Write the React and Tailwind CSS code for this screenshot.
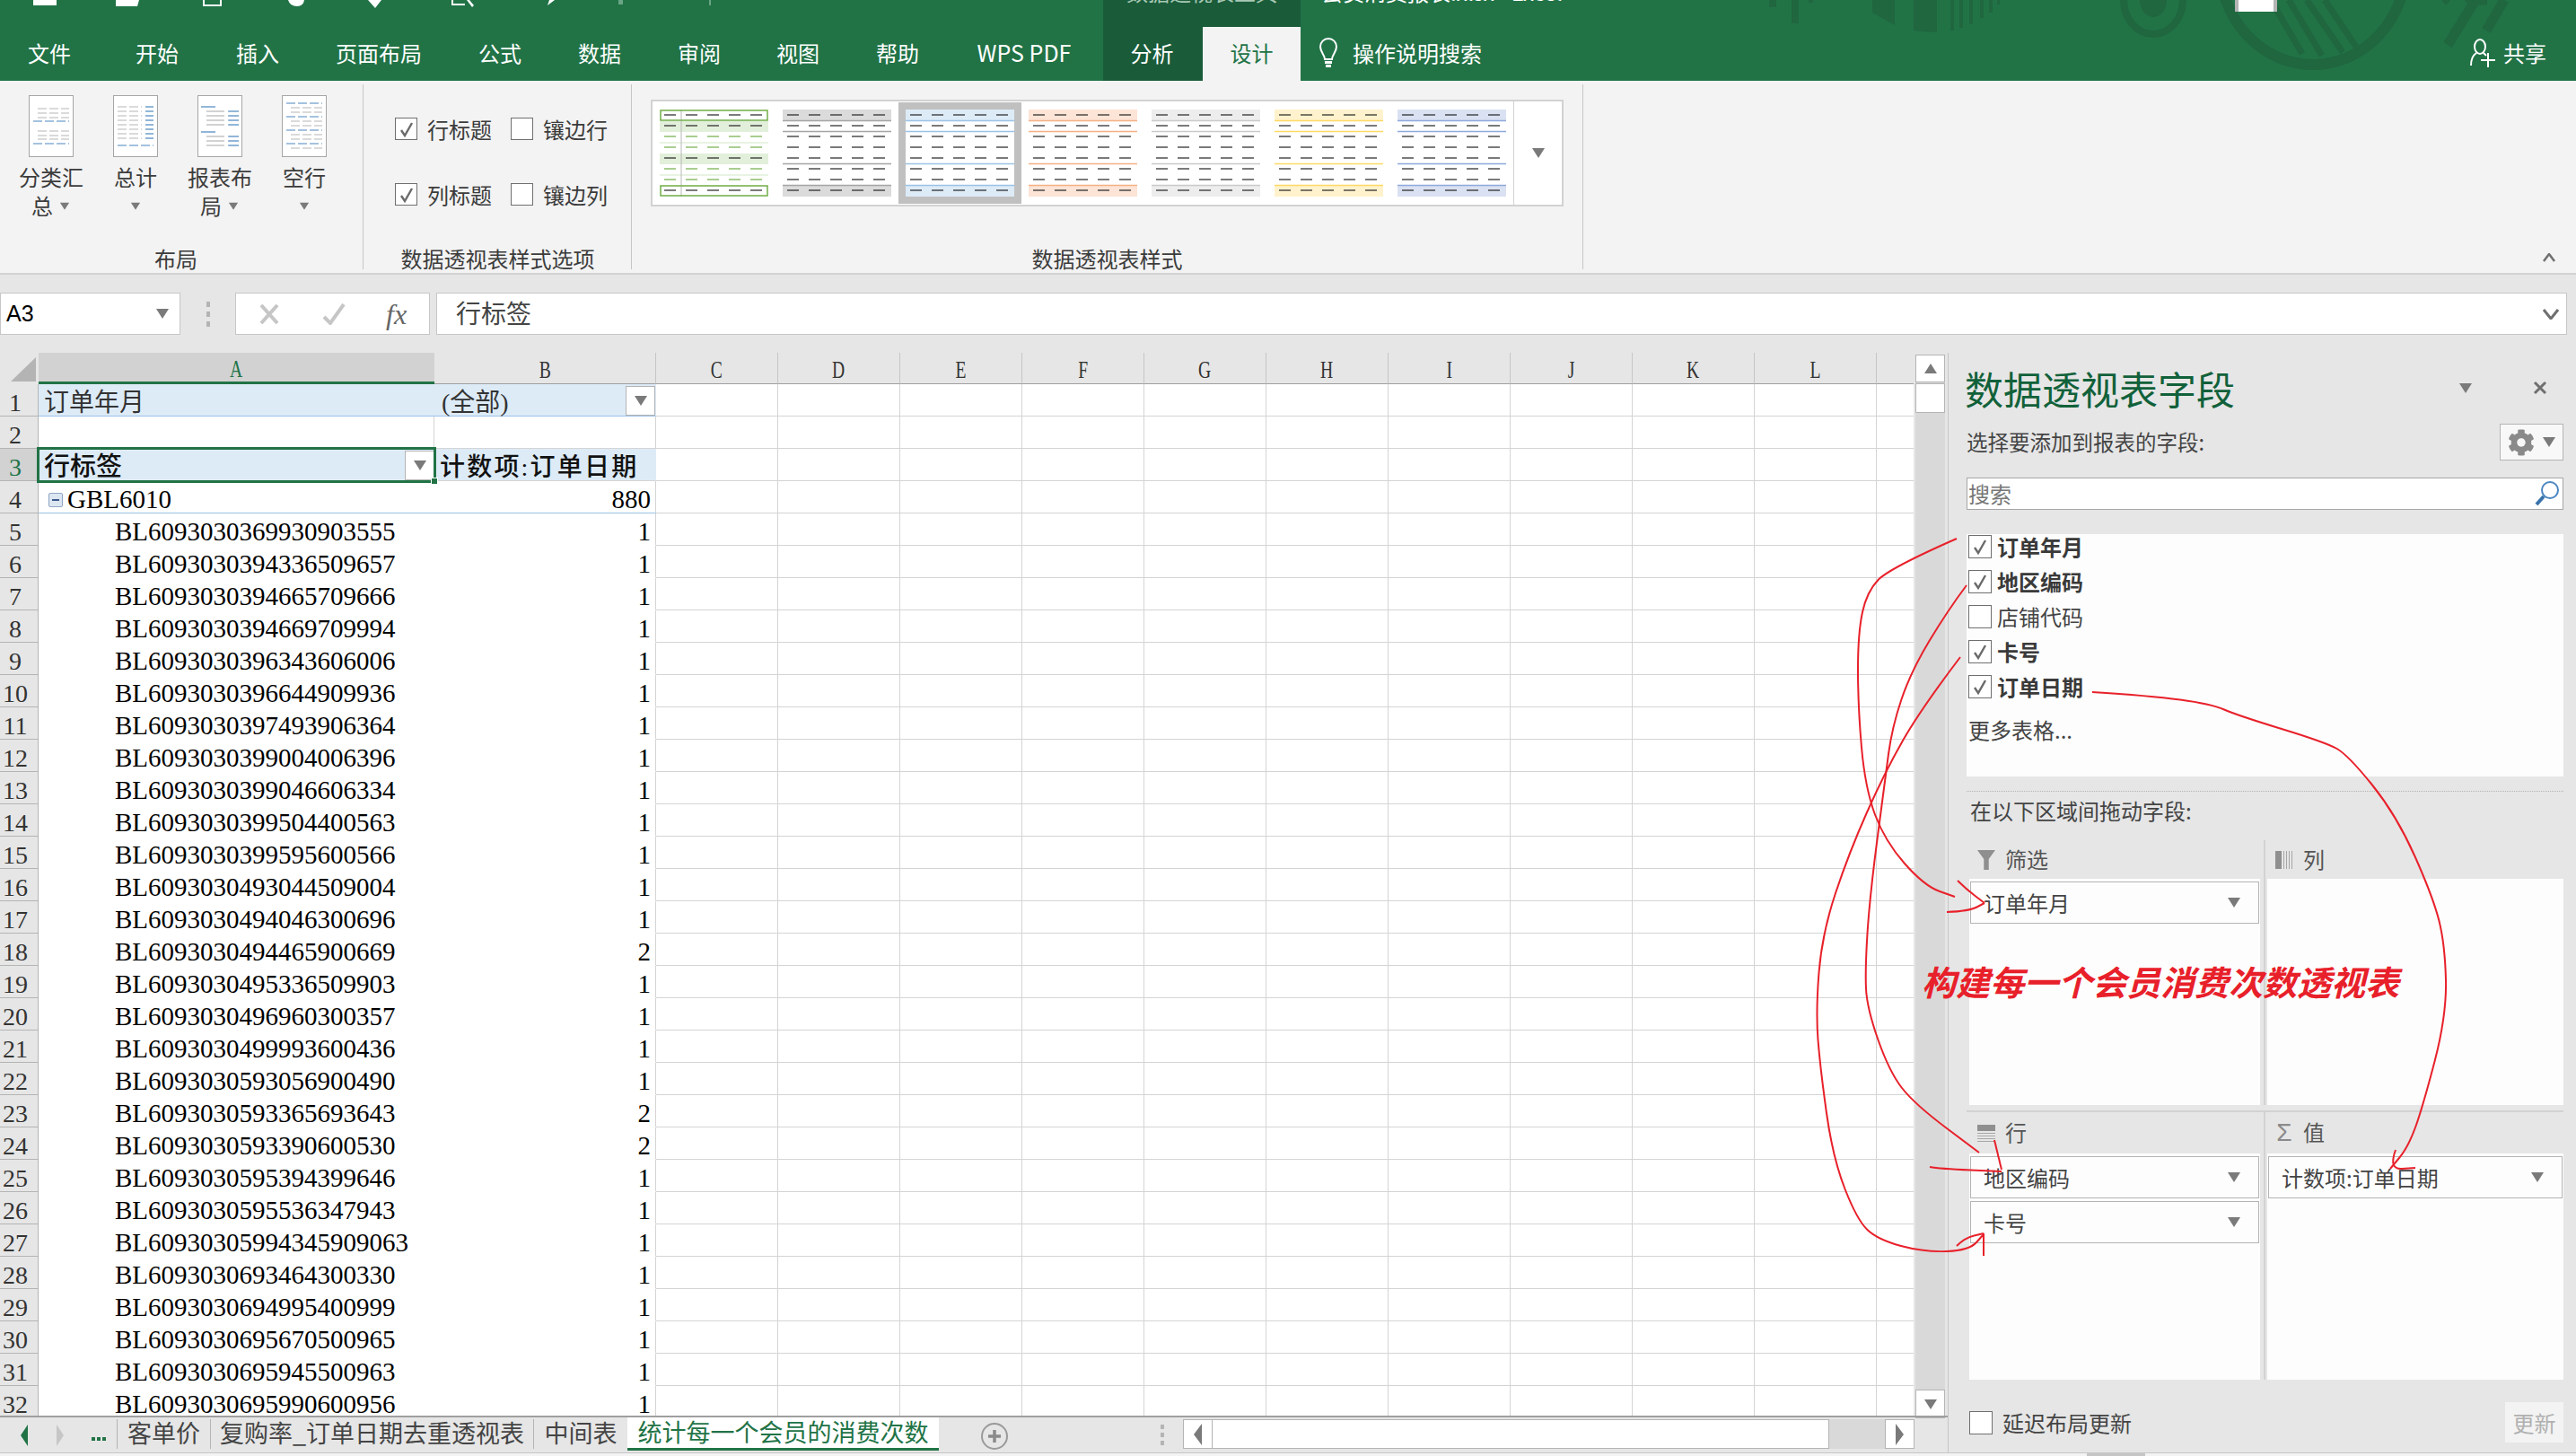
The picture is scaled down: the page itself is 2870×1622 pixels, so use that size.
import { FaCog } from 'react-icons/fa';

const dataRows = [
  ['BL6093030369930903555', 1], ['BL6093030394336509657', 1], ['BL6093030394665709666', 1], ['BL6093030394669709994', 1],
  ['BL6093030396343606006', 1], ['BL6093030396644909936', 1], ['BL6093030397493906364', 1], ['BL6093030399004006396', 1],
  ['BL6093030399046606334', 1], ['BL6093030399504400563', 1], ['BL6093030399595600566', 1], ['BL6093030493044509004', 1],
  ['BL6093030494046300696', 1], ['BL6093030494465900669', 2], ['BL6093030495336509903', 1], ['BL6093030496960300357', 1],
  ['BL6093030499993600436', 1], ['BL6093030593056900490', 1], ['BL6093030593365693643', 2], ['BL6093030593390600530', 2],
  ['BL6093030595394399646', 1], ['BL6093030595536347943', 1], ['BL60930305994345909063', 1], ['BL6093030693464300330', 1],
  ['BL6093030694995400999', 1], ['BL6093030695670500965', 1], ['BL6093030695945500963', 1], ['BL6093030695990600956', 1],
];

const tabs = [
  ['文件', 'w-[110px]'], ['开始', 'w-[130px]'], ['插入', 'w-[94px]'], ['页面布局', 'w-[176px]'], ['公式', 'w-[94px]'],
  ['数据', 'w-[128px]'], ['审阅', 'w-[94px]'], ['视图', 'w-[126px]'], ['帮助', 'w-[96px]'], ['WPS PDF', 'w-[181px] pl-[5px] text-[25px]'],
];

const otherCols = ['C', 'D', 'E', 'F', 'G', 'H', 'I', 'J', 'K', 'L'];

const styles = [
  { fill: '#dbdbdb', line: '#a5a5a5' },
  { fill: '#ddebf7', line: '#9bc2e6', selected: true },
  { fill: '#fce4d6', line: '#f4b084' },
  { fill: '#ededed', line: '#c9c9c9' },
  { fill: '#fff2cc', line: '#ffd966' },
  { fill: '#d9e1f2', line: '#8ea9db' },
];

function Tri({ dir = 'down', className = '' }) {
  const pts = { down: '0,0 14,0 7,11', up: '0,11 14,11 7,0', left: '9,0 9,24 0,12', right: '0,0 0,24 9,12' }[dir];
  const box = dir === 'left' || dir === 'right' ? [9, 24] : [14, 11];
  return (
    <svg width={box[0]} height={box[1]} viewBox={`0 0 ${box[0]} ${box[1]}`} className={`shrink-0 ${className}`}>
      <polygon points={pts} fill="#7a7a7a" />
    </svg>
  );
}

function Check({ checked, size = 'w-[25px] h-[25px]' }) {
  return (
    <div className={`${size} shrink-0 bg-white border border-[#6f6f6f] flex items-center justify-center`}>
      {checked && (
        <svg width="16" height="18" viewBox="0 0 16 18">
          <path d="M2 10 L6 16 L14 2" fill="none" stroke="#6a6a6a" strokeWidth="2.4" />
        </svg>
      )}
    </div>
  );
}

function DocIcon({ rows }) {
  return (
    <svg width="50" height="69" viewBox="0 0 50 69" className="shrink-0">
      <rect x="0.5" y="0.5" width="49" height="68" fill="#fff" stroke="#a6a6a6" />
      {rows.map(([y, x1, x2, c], i) => (
        <line key={i} x1={x1} x2={x2} y1={y} y2={y} stroke={c === 'b' ? '#4a86c0' : '#b5b5b5'} strokeWidth="1.2" strokeDasharray={x2 - x1 > 20 ? '10 3' : undefined} />
      ))}
    </svg>
  );
}

const g = 'g';
const b = 'b';
const docRows = [
  [[15, 10, 45, g], [20, 10, 45, g], [25, 10, 45, g], [29, 5, 45, b], [40, 10, 45, g], [45, 10, 45, g], [49, 10, 45, g], [54, 5, 45, b]],
  [13, 18, 23, 28, 33, 38, 43, 48].flatMap((y) => [[y, 5, 32, g], [y, 36, 45, b]]).concat([[56, 5, 45, b]]),
  [[13, 4, 20, b], [18, 10, 30, g], [18, 34, 46, b], [23, 10, 30, g], [23, 34, 46, b], [28, 10, 30, g], [28, 34, 46, b], [33, 10, 30, g], [33, 34, 46, b], [41, 4, 20, b], [46, 10, 30, g], [46, 34, 46, b], [51, 10, 30, g], [51, 34, 46, b], [56, 10, 30, g], [56, 34, 46, b]],
  [[9, 5, 45, b], [14, 10, 45, g], [19, 10, 45, g], [24, 5, 45, b], [29, 10, 45, g], [34, 10, 45, g], [39, 5, 45, b], [44, 10, 45, g], [49, 10, 45, g], [54, 5, 45, b], [59, 10, 45, g]],
];

function LayoutButton({ lines, caret, rows }) {
  return (
    <div className="w-[94px] flex flex-col items-center text-[24px] leading-[32px] text-[#3c3c3c]">
      <div className="mt-[16px] mb-[6px]">
        <DocIcon rows={rows} />
      </div>
      <div>{lines[0]}</div>
      <div className="flex items-center gap-[6px] h-[32px]">
        {lines[1] && <span>{lines[1]}</span>}
        {caret && <Tri className="scale-75" />}
      </div>
    </div>
  );
}

function GreenThumb() {
  const rowYs = [6, 18, 30, 42, 54, 66, 78, 90];
  return (
    <svg width="121" height="97" viewBox="0 0 121 97">
      <rect x="0" y="13" width="121" height="12" fill="#e2efda" />
      <rect x="0" y="49" width="121" height="12" fill="#e2efda" />
      <line x1="0" x2="121" y1="37" y2="37" stroke="#e2efda" strokeWidth="1.5" />
      <line x1="0" x2="121" y1="73" y2="73" stroke="#e2efda" strokeWidth="1.5" />
      <line x1="24" x2="24" y1="0" y2="97" stroke="#b8b8b8" strokeWidth="1" />
      <rect x="1" y="1" width="119" height="11" fill="none" stroke="#70ad47" strokeWidth="1.5" />
      <rect x="1" y="85" width="119" height="11" fill="none" stroke="#70ad47" strokeWidth="1.5" />
      {rowYs.map((y, r) =>
        [5, 29, 53, 77, 101].map((x) => (
          <line key={`${r}-${x}`} x1={x} x2={x + 13} y1={y} y2={y} stroke={[0, 1, 4, 7].includes(r) ? '#222' : '#70ad47'} strokeWidth="1.2" />
        )),
      )}
    </svg>
  );
}

function StyleThumb({ fill, line }) {
  const rowYs = [6, 18, 30, 42, 54, 66, 78, 90];
  return (
    <svg width="121" height="97" viewBox="0 0 121 97">
      <rect x="0" y="0" width="121" height="97" fill="#fff" />
      <rect x="0" y="0" width="121" height="12" fill={fill} />
      <rect x="0" y="85" width="121" height="12" fill={fill} />
      {[12, 24, 60, 84].map((y) => (
        <line key={y} x1="0" x2="121" y1={y + 0.5} y2={y + 0.5} stroke={line} strokeWidth="1.5" />
      ))}
      {rowYs.map((y) =>
        [5, 29, 53, 77, 101].map((x) => (
          <line key={`${y}-${x}`} x1={x} x2={x + 13} y1={y} y2={y} stroke="#222" strokeWidth="1.2" />
        )),
      )}
    </svg>
  );
}

function DropBtn({ className = '' }) {
  return (
    <div className={`w-[33px] h-[33px] -mt-[6px] bg-white border border-[#b4b4b4] flex items-center justify-center ${className}`}>
      <Tri />
    </div>
  );
}

function GridRow({ n, a, bCell, selected, blue, blueLine, plain }) {
  const gridLine = plain ? 'border-b-white' : blueLine ? 'border-b-[#9bc2e6]' : 'border-b-[#d4d4d4]';
  const fill = blue ? 'bg-[#ddebf7]' : 'bg-white';
  return (
    <div className="flex h-[36px] shrink-0">
      <div className={`w-[43px] shrink-0 flex items-center justify-center pr-[8px] pt-[7px] border-r border-b border-[#b4b4b4] text-[28px] ${selected ? 'bg-[#d2d2d2] text-[#217346]' : 'bg-[#e6e6e6] text-[#333]'}`}>
        {n}
      </div>
      <div className={`w-[441px] shrink-0 flex items-center pt-[7px] border-b ${gridLine} ${fill} ${blue || blueLine || plain ? '' : 'border-r border-r-[#d4d4d4]'}`}>
        {a}
      </div>
      <div className={`w-[247px] shrink-0 flex items-center pt-[7px] border-b ${gridLine} ${fill} border-r ${blue ? 'border-r-[#ddebf7]' : 'border-r-[#d4d4d4]'}`}>
        {bCell}
      </div>
      {otherCols.map((c) => (
        <div key={c} className="w-[136px] shrink-0 border-r border-b border-[#d4d4d4] bg-white" />
      ))}
      <div className="w-[41px] shrink-0 border-b border-[#d4d4d4] bg-white" />
    </div>
  );
}

function SpreadGrid() {
  return (
    <div className="w-[2132px] h-[1184px] overflow-hidden relative shrink-0">
      <div className="flex h-[35px]">
        <div className="w-[43px] shrink-0 flex items-end justify-end pr-[3px] pb-[3px]">
          <svg width="28" height="27" viewBox="0 0 28 27">
            <polygon points="28,0 28,27 0,27" fill="#b4b4b4" />
          </svg>
        </div>
        <div className="w-[441px] shrink-0 bg-[#d2d2d2] border-b-[3px] border-[#217346] flex items-center justify-center pt-[3px] text-[#217346] text-[28px]">
          <span className="inline-block scale-x-[0.7]">A</span>
        </div>
        {[['B', 'w-[247px]'], ...otherCols.map((c) => [c, 'w-[136px]'])].map(([c, w]) => (
          <div key={c} className={`${w} shrink-0 border-r border-b border-r-[#c6c6c6] border-b-[#9f9f9f] flex items-center justify-center pt-[3px] text-[#333] text-[28px]`}>
            <span className="inline-block scale-x-[0.7]">{c}</span>
          </div>
        ))}
        <div className="flex-1 border-b border-[#9f9f9f]" />
      </div>

      <GridRow
        n="1"
        blue
        blueLine
        a={<span className="pl-[6px] text-[28px] text-[#333]">订单年月</span>}
        bCell={
          <>
            <span className="pl-[8px] text-[28px] text-[#333]">(全部)</span>
            <DropBtn className="ml-auto" />
          </>
        }
      />
      <GridRow n="2" />
      <GridRow
        n="3"
        selected
        blue
        a={
          <>
            <span className="pl-[6px] text-[29px] font-medium text-[#111]">行标签</span>
            <DropBtn className="ml-auto" />
          </>
        }
        bCell={<span className="pl-[6px] text-[28px] font-medium text-[#111] whitespace-nowrap tracking-[2.2px]">计数项:订单日期</span>}
      />
      <GridRow
        n="4"
        blueLine
        a={
          <>
            <span className="ml-[11px] mr-[5px] w-[16px] h-[16px] rounded-[2px] bg-[#dce6f1] border border-[#8fa5c6] flex items-center justify-center">
              <span className="w-[8px] h-[2px] bg-[#3c5a8c]" />
            </span>
            <span className="text-[29px] text-black">GBL6010</span>
          </>
        }
        bCell={<span className="ml-auto pr-[5px] text-[29px] text-black">880</span>}
      />
      {dataRows.map(([id, count], i) => (
        <GridRow
          key={id}
          n={String(i + 5)}
          plain
          a={<span className="pl-[85px] text-[29px] text-black whitespace-nowrap">{id}</span>}
          bCell={<span className="ml-auto pr-[5px] text-[29px] text-black">{count}</span>}
        />
      ))}

      <div className="absolute left-[41px] top-[105px] w-[445px] h-[40px] border-[3px] border-[#217346] pointer-events-none" />
      <div className="absolute left-[480px] top-[139px] w-[8px] h-[8px] bg-[#217346] border border-white" />
    </div>
  );
}

function SheetBar() {
  const sheets = [
    ['客单价', 'w-[104px]'],
    ['复购率_订单日期去重透视表', 'w-[360px]'],
    ['中间表', 'w-[105px]'],
  ];
  return (
    <div className="flex h-[41px] border-t-2 border-[#9f9f9f] text-[27px] leading-[36px]">
      <div className="w-[130px] shrink-0 flex items-center pl-[23px] gap-[32px]">
        <svg width="8" height="24" viewBox="0 0 8 24"><polygon points="8,0 8,24 0,12" fill="#217346" /></svg>
        <svg width="8" height="24" viewBox="0 0 8 24"><polygon points="0,0 0,24 8,12" fill="#c6c6c6" /></svg>
        <span className="flex gap-[2px] mt-[8px] -ml-[1px]">
          <i className="w-[4px] h-[4px] bg-[#217346]" />
          <i className="w-[4px] h-[4px] bg-[#217346]" />
          <i className="w-[4px] h-[4px] bg-[#217346]" />
        </span>
      </div>
      {sheets.map(([name, w]) => (
        <div key={name} className={`${w} shrink-0 h-[33px] my-[2px] border-l border-[#b4b4b4] flex items-center justify-center text-[#444] whitespace-nowrap`}>
          <span className="-mt-[3px]">{name}</span>
        </div>
      ))}
      <div className="w-[347px] shrink-0 h-[37px] bg-white border-b-[3px] border-[#217346] flex items-center justify-center text-[#217346] whitespace-nowrap">
        <span className="-mt-[3px]">统计每一个会员的消费次数</span>
      </div>
      <div className="ml-[47px] mt-[6px] w-[30px] h-[30px] rounded-full border-2 border-[#9a9a9a] flex items-center justify-center text-[#8a8a8a] shrink-0">
        <svg width="16" height="16" viewBox="0 0 16 16"><path d="M8 1V15M1 8H15" stroke="#8a8a8a" strokeWidth="3.5" /></svg>
      </div>
      <div className="ml-[170px] mt-[8px] flex flex-col gap-[4px] shrink-0">
        <i className="w-[4px] h-[5px] bg-[#b4b4b4]" />
        <i className="w-[4px] h-[5px] bg-[#b4b4b4]" />
        <i className="w-[4px] h-[5px] bg-[#b4b4b4]" />
      </div>
      <div className="ml-[21px] mt-[2px] h-[33px] w-[815px] shrink-0 flex">
        <div className="w-[33px] bg-white border border-[#b4b4b4] flex items-center justify-center"><Tri dir="left" /></div>
        <div className="w-[687px] bg-white border-y border-r border-[#b4b4b4]" />
        <div className="flex-1 bg-[#d9d9d9]" />
        <div className="w-[33px] bg-white border border-[#b4b4b4] flex items-center justify-center"><Tri dir="right" /></div>
      </div>
    </div>
  );
}

function FieldRow({ label, checked }) {
  return (
    <div className="flex items-center h-[39px] pl-[2px]">
      <Check checked={checked} size="w-[26px] h-[26px]" />
      <span className={`ml-[6px] text-[24px] ${checked ? 'font-bold text-[#3a3a3a]' : 'text-[#444]'}`}>{label}</span>
    </div>
  );
}

function DropItem({ label }) {
  return (
    <div className="mx-[1px] mt-[3px] h-[47px] bg-[#fdfdfd] border border-[#b4b4b4] flex items-center pl-[14px] pr-[20px] text-[24px] text-[#444]">
      <span className="whitespace-nowrap">{label}</span>
      <Tri className="ml-auto" />
    </div>
  );
}

function DropArea({ icon, label, items = [], labelH, left }) {
  return (
    <div className={left ? 'w-[333px] shrink-0 pl-[3px] pr-[4px] border-r-2 border-[#d2d2d2]' : 'flex-1 pl-[2px]'}>
      <div className={`${labelH} flex items-center pl-[9px] gap-[11px] text-[24px] text-[#555]`}>
        <span className="w-[20px] flex justify-center shrink-0">{icon}</span>
        <span className="-mt-[2px]">{label}</span>
      </div>
      <div className="h-[252px] bg-[#fdfdfd] overflow-hidden">
        {items.map((it) => (
          <DropItem key={it} label={it} />
        ))}
      </div>
    </div>
  );
}

function FieldPane() {
  return (
    <div className="flex-1 border-l border-[#c6c6c6] pl-[20px] pr-[14px] pt-[15px]">
      <div className="flex items-center h-[48px] -ml-[2px]">
        <span className="text-[43px] leading-[48px] text-[#11613a] whitespace-nowrap">数据透视表字段</span>
        <Tri className="ml-[250px]" />
        <svg width="16" height="16" viewBox="0 0 16 16" className="ml-[68px]"><path d="M2 2L14 14M14 2L2 14" stroke="#6f6f6f" strokeWidth="3" /></svg>
      </div>
      <div className="mt-[16px] h-[41px] flex items-center justify-between">
        <span className="text-[23.5px] text-[#444] whitespace-nowrap">选择要添加到报表的字段:</span>
        <div className="w-[71px] h-[41px] bg-[#f8f8f8] border border-[#b4b4b4] flex items-center justify-center gap-[9px]">
          <FaCog className="text-[#8a8a8a] text-[30px]" />
          <Tri />
        </div>
      </div>
      <div className="mt-[19px] h-[36px] bg-white border border-[#a6a6a6] flex items-center pl-[1px] pr-[3px] text-[24px] text-[#777]">
        <span>搜索</span>
        <svg width="28" height="30" viewBox="0 0 28 30" className="ml-auto">
          <circle cx="17" cy="11" r="9" fill="none" stroke="#4a86c0" strokeWidth="2" />
          <path d="M10 18L2 27" stroke="#3a73ac" strokeWidth="4" />
        </svg>
      </div>
      <div className="mt-[27px] h-[270px] bg-[#fdfdfd] flow-root">
        <div className="-mt-[6px]">
          <FieldRow label="订单年月" checked />
          <FieldRow label="地区编码" checked />
          <FieldRow label="店铺代码" />
          <FieldRow label="卡号" checked />
          <FieldRow label="订单日期" checked />
          <div className="mt-[11px] pl-[2px] text-[24px] text-[#444]">更多表格...</div>
        </div>
      </div>
      <div className="mt-[16px] border-t border-dotted border-[#b4b4b4]" />
      <div className="h-[42px] flex items-center pl-[4px] text-[24px] text-[#444] whitespace-nowrap">在以下区域间拖动字段:</div>
      <div className="mt-[12px] flex border-b-2 border-[#d2d2d2] pb-[6px]">
        <DropArea
          left
          labelH="h-[43px]"
          label="筛选"
          items={['订单年月']}
          icon={<svg width="22" height="24" viewBox="0 0 22 24"><path d="M0 0H22L14 11V24H8V11Z" fill="#8f8f8f" /></svg>}
        />
        <DropArea
          labelH="h-[43px]"
          label="列"
          icon={
            <svg width="20" height="20" viewBox="0 0 20 20">
              <rect x="0" y="0" width="7" height="20" fill="#8f8f8f" />
              <path d="M9.5 0V20M12.5 0V20M15.5 0V20M18.5 0V20" stroke="#a6a6a6" strokeWidth="1" />
            </svg>
          }
        />
      </div>
      <div className="flex">
        <DropArea
          left
          labelH="h-[46px]"
          label="行"
          items={['地区编码', '卡号']}
          icon={
            <svg width="20" height="19" viewBox="0 0 20 19">
              <rect x="0" y="0" width="20" height="7" fill="#8f8f8f" />
              <path d="M0 9.5H20M0 12.5H20M0 15.5H20M0 18.5H20" stroke="#a6a6a6" strokeWidth="1" />
            </svg>
          }
        />
        <DropArea
          labelH="h-[46px]"
          label="值"
          items={['计数项:订单日期']}
          icon={<span className="text-[28px] leading-none text-[#8a8a8a] [font-family:'Liberation_Sans',sans-serif]">Σ</span>}
        />
      </div>
      <div className="mt-[25px] flex items-center pl-[3px] text-[24px] text-[#444]">
        <Check size="w-[26px] h-[26px]" />
        <span className="ml-[11px] whitespace-nowrap">延迟布局更新</span>
        <div className="ml-auto w-[65px] h-[45px] bg-[#f3f3f3] flex items-center justify-center text-[#b0b0b0]">更新</div>
      </div>
    </div>
  );
}

function smooth(pts) {
  let d = `M${pts[0][0]} ${pts[0][1]}`;
  for (let i = 1; i < pts.length - 1; i++) {
    const mx = (pts[i][0] + pts[i + 1][0]) / 2;
    const my = (pts[i][1] + pts[i + 1][1]) / 2;
    d += ` Q${pts[i][0]} ${pts[i][1]} ${mx} ${my}`;
  }
  const last = pts[pts.length - 1];
  return `${d} L${last[0]} ${last[1]}`;
}

const redCurves = [
  [[2180, 600], [2105, 633], [2080, 659], [2070, 705], [2070, 787], [2078, 878], [2100, 937], [2144, 987], [2178, 999]],
  [[2169, 1016], [2194, 1015], [2211, 1006]],
  [[2181, 981], [2190, 990], [2211, 1006]],
  [[2191, 652], [2170, 680], [2129, 748], [2108, 810], [2100, 870], [2083, 1000], [2078, 1080], [2080, 1123], [2105, 1194], [2133, 1230], [2205, 1284]],
  [[2222, 1270], [2230, 1303]],
  [[2150, 1300], [2161, 1302], [2230, 1305]],
  [[2184, 732], [2140, 790], [2100, 860], [2060, 950], [2030, 1040], [2023, 1127], [2028, 1190], [2042, 1290], [2069, 1359], [2092, 1381], [2144, 1395], [2194, 1393], [2210, 1375]],
  [[2180, 1388], [2189, 1379], [2210, 1374]],
  [[2210, 1374], [2210, 1399]],
  [[2331, 771], [2395, 775], [2463, 784], [2493, 797], [2591, 827], [2616, 841], [2670, 908], [2711, 1000], [2724, 1052], [2726, 1131], [2699, 1234], [2683, 1278], [2663, 1302]],
  [[2669, 1281], [2661, 1303], [2691, 1301]],
];

function Annotations() {
  return (
    <>
      <svg width="2870" height="1622" viewBox="0 0 2870 1622" className="absolute left-0 top-0 pointer-events-none">
        {redCurves.map((pts, i) => (
          <path key={i} d={smooth(pts)} fill="none" stroke="#e8202a" strokeWidth="2" />
        ))}
      </svg>
      <div className="absolute left-[2141px] top-[1068px] text-[38px] leading-[50px] font-bold italic text-[#e8202a] whitespace-nowrap">
        构建每一个会员消费次数透视表
      </div>
    </>
  );
}

function Header() {
  return (
    <div className="h-[90px] bg-[#217346] relative overflow-hidden text-white">
      <svg width="1000" height="90" viewBox="1950 0 1000 90" className="absolute right-[-80px] top-0">
        <g fill="#20663f">
          <rect x="1971" y="0" width="8" height="8" />
          <rect x="1996" y="0" width="8" height="26" />
          <rect x="2015" y="0" width="5" height="3" />
          <path d="M2086 0H2111V28L2086 14Z" />
          <path d="M2132 0H2158V36Q2145 36 2132 34Z" />
          <rect x="2173" y="0" width="4" height="34" />
          <rect x="2183" y="0" width="4" height="31" />
          <rect x="2194" y="0" width="4" height="27" />
          <rect x="2206" y="0" width="4" height="20" />
          <rect x="2216" y="0" width="4" height="14" />
          <rect x="2225" y="0" width="3" height="5" />
        </g>
        <ellipse cx="2399" cy="0" rx="33" ry="38" fill="none" stroke="#20663f" strokeWidth="8" />
        <ellipse cx="2399" cy="0" rx="15" ry="19" fill="#20663f" />
        <ellipse cx="2577" cy="-40" rx="104" ry="112" fill="none" stroke="#20663f" strokeWidth="12" />
        <path d="M2530 0L2565 60M2550 0L2587 62M2570 0L2610 58M2590 0L2625 52" stroke="#20663f" strokeWidth="7" />
        <path d="M2727 50L2758 0H2771M2770 34L2790 0" fill="none" stroke="#20663f" strokeWidth="11" />
        <path d="M2720 0L2725 6L2730 0M2745 0L2752 6L2758 0" fill="#20663f" />
      </svg>
      <div className="absolute left-[2490px] top-0 w-[47px] h-[13px] bg-white border-x-[4px] border-[#b4b4b4]" />

      <div className="relative flex h-[30px]">
        <svg width="1229" height="30" viewBox="0 0 1229 30" className="shrink-0">
          <g fill="#fff">
            <path d="M37 0H63V6H37Z" />
            <path d="M129 0H155L153 7H129Z" />
            <path d="M226 0V7H247V0H245V5H228V0Z" />
            <path d="M321 0H339Q338 7 331 7Q323 7 321 0Z" />
            <path d="M410 0H425L418 9Z" />
            <path d="M503 0V6H518V4H505V0ZM520 0L526 8L528 6L523 0Z" />
            <path d="M612 0H618L610 6Z" />
          </g>
          <rect x="689" y="0" width="5" height="5" fill="#6aa585" />
          <rect x="790" y="0" width="2" height="6" fill="#6aa585" />
        </svg>
        <div className="w-[220px] h-[30px] bg-[#1a5c3a] overflow-hidden text-center shrink-0">
          <div className="-mt-[21px] text-[24px] leading-[24px] text-[#a9c9b5]">数据透视表工具</div>
        </div>
        <div className="ml-[23px] overflow-hidden h-[30px] whitespace-nowrap">
          <div className="-mt-[21px] text-[24px] leading-[24px]">会员消费报表.xlsx - Excel</div>
        </div>
      </div>

      <div className="relative flex h-[60px] text-[24px] items-stretch">
        {tabs.map(([t, w]) => (
          <div key={t} className={`${w} shrink-0 flex items-center justify-center whitespace-nowrap pb-[2px]`}>{t}</div>
        ))}
        <div className="w-[111px] bg-[#1a5c3a] flex items-center justify-center shrink-0 pb-[2px] pr-[2px]">分析</div>
        <div className="w-[109px] bg-[#f3f3f3] text-[#217346] flex items-center justify-center shrink-0 pb-[2px]">设计</div>
        <div className="ml-[20px] flex items-center whitespace-nowrap pb-[2px]">
          <svg width="22" height="34" viewBox="0 0 22 34" className="shrink-0">
            <path d="M7 24C7 19 2 16 2 10A9 9 0 0 1 20 10C20 16 15 19 15 24Z" fill="none" stroke="#fff" strokeWidth="2" />
            <rect x="7" y="26" width="8" height="3" fill="#fff" />
            <rect x="8" y="30" width="6" height="3" fill="#fff" />
          </svg>
          <span className="ml-[16px]">操作说明搜索</span>
        </div>
        <div className="ml-auto pr-[33px] flex items-center whitespace-nowrap pb-[2px]">
          <svg width="28" height="32" viewBox="0 0 28 32" className="shrink-0">
            <ellipse cx="11" cy="9" rx="6" ry="8" fill="none" stroke="#fff" strokeWidth="2" />
            <path d="M7 16Q1 20 1 30M15 16L18 19" fill="none" stroke="#fff" strokeWidth="2" />
            <path d="M20 16V32M12 24H28" stroke="#fff" strokeWidth="2" />
          </svg>
          <span className="ml-[9px]">共享</span>
        </div>
      </div>
    </div>
  );
}

function Ribbon() {
  return (
    <div className="h-[216px] bg-[#f3f3f3] border-b-2 border-[#d2d2d2] flex relative text-[24px] text-[#3c3c3c]">
      <div className="w-[405px] shrink-0 flex flex-col pl-[10px] mt-[4px] h-[206px] border-r border-[#c6c6c6]">
        <div className="flex -mt-[4px]">
          <LayoutButton lines={['分类汇', '总']} caret rows={docRows[0]} />
          <LayoutButton lines={['总计']} caret rows={docRows[1]} />
          <LayoutButton lines={['报表布', '局']} caret rows={docRows[2]} />
          <LayoutButton lines={['空行']} caret rows={docRows[3]} />
        </div>
        <div className="mt-auto -mb-[4px] h-[32px] leading-[32px] text-center pr-[22px]">布局</div>
      </div>

      <div className="w-[299px] shrink-0 flex flex-col mt-[4px] h-[206px] border-r border-[#c6c6c6]">
        <div className="pl-[35px] pt-[37px] flex flex-col gap-[48px]">
          {[['行标题', true, '镶边行'], ['列标题', true, '镶边列']].map(([l1, c1, l2]) => (
            <div key={l1} className="flex items-center h-[25px] leading-none">
              <Check checked={c1} />
              <span className="ml-[11px] w-[72px]">{l1}</span>
              <span className="ml-[21px]"><Check /></span>
              <span className="ml-[11px]">{l2}</span>
            </div>
          ))}
        </div>
        <div className="mt-auto -mb-[4px] h-[32px] leading-[32px] text-center pl-[1px] whitespace-nowrap">数据透视表样式选项</div>
      </div>

      <div className="w-[1060px] shrink-0 flex flex-col mt-[4px] h-[206px] border-r border-[#c6c6c6]">
        <div className="ml-[21px] mt-[17px] w-[1017px] h-[119px] bg-white border-2 border-[#d2d2d2] flex">
          {[null, ...styles].map((s, i) => (
            <div
              key={i}
              className={`w-[137px] h-[113px] mt-[1px] flex items-center justify-center shrink-0 ${s && s.selected ? 'bg-[#c0c0c0]' : ''}`}
            >
              {s ? <StyleThumb fill={s.fill} line={s.line} /> : <GreenThumb />}
            </div>
          ))}
          <div className="flex-1 border-l border-[#d2d2d2] flex items-center justify-center">
            <Tri />
          </div>
        </div>
        <div className="mt-auto -mb-[4px] h-[32px] leading-[32px] text-center whitespace-nowrap">数据透视表样式</div>
      </div>

      <div className="ml-auto mt-auto mb-[12px] mr-[23px]">
        <svg width="14" height="10" viewBox="0 0 14 10"><path d="M1 9L7 1L13 9" fill="none" stroke="#6f6f6f" strokeWidth="2.5" /></svg>
      </div>
    </div>
  );
}

function FormulaBar() {
  return (
    <div className="h-[87px] pt-[20px] flex items-start">
      <div className="w-[201px] h-[47px] bg-white border border-[#c6c6c6] flex items-center pl-[6px] pr-[12px] text-[25px] text-black [font-family:'Liberation_Sans',sans-serif] shrink-0">
        A3
        <Tri className="ml-auto" />
      </div>
      <div className="w-[61px] h-[47px] flex flex-col items-center justify-center gap-[5px] shrink-0">
        <i className="w-[4px] h-[6px] bg-[#b4b4b4]" />
        <i className="w-[4px] h-[6px] bg-[#b4b4b4]" />
        <i className="w-[4px] h-[6px] bg-[#b4b4b4]" />
      </div>
      <div className="w-[217px] h-[47px] bg-white border border-[#c6c6c6] flex items-center pl-[26px] shrink-0">
        <svg width="22" height="22" viewBox="0 0 22 22"><path d="M2 1L20 21M20 1L2 21" stroke="#c6c6c6" strokeWidth="4" /></svg>
        <svg width="26" height="24" viewBox="0 0 26 24" className="ml-[48px]"><path d="M2 15L9 22L24 1" fill="none" stroke="#c6c6c6" strokeWidth="4" /></svg>
        <span className="ml-[45px] text-[32px] leading-[32px] italic text-[#666] [font-family:'Liberation_Serif',serif]">fx</span>
      </div>
      <div className="ml-[7px] w-[2374px] h-[47px] bg-white border border-[#c6c6c6] flex items-center pl-[21px] pr-[8px] text-[28px] text-[#444] shrink-0">
        <span className="-mt-[3px]">行标签</span>
        <svg width="18" height="12" viewBox="0 0 18 12" className="ml-auto"><path d="M1 1L9 11L17 1" fill="none" stroke="#6f6f6f" strokeWidth="3" /></svg>
      </div>
    </div>
  );
}

export default function App() {
  return (
    <div className="w-[2870px] h-[1622px] relative overflow-hidden bg-[#e6e6e6] flex flex-col [font-family:'Noto_Sans_CJK_SC',sans-serif]">
      <Header />
      <Ribbon />
      <FormulaBar />

      <div className="flex h-[1225px]">
        <div className="w-[2170px] shrink-0 flex flex-col">
          <div className="flex h-[1184px] [font-family:'Liberation_Serif','Noto_Sans_CJK_SC',serif]">
            <SpreadGrid />
            <div className="ml-[2px] mt-[2px] w-[33px] flex flex-col bg-[#d9d9d9] h-[1185px]">
              <div className="h-[31px] bg-white border border-[#b4b4b4] flex items-center justify-center"><Tri dir="up" /></div>
              <div className="h-[33px] mt-[1px] bg-white border border-[#b4b4b4]" />
              <div className="mt-auto h-[32px] bg-white border border-[#b4b4b4] flex items-center justify-center"><Tri /></div>
            </div>
          </div>
          <SheetBar />
        </div>
        <FieldPane />
      </div>

      <div className="h-[4px] bg-[#f3f3f3] border-t border-[#c6c6c6] flex">
        <div className="ml-[2325px] w-[65px] bg-[#c6c6c6]" />
      </div>

      <Annotations />
    </div>
  );
}
